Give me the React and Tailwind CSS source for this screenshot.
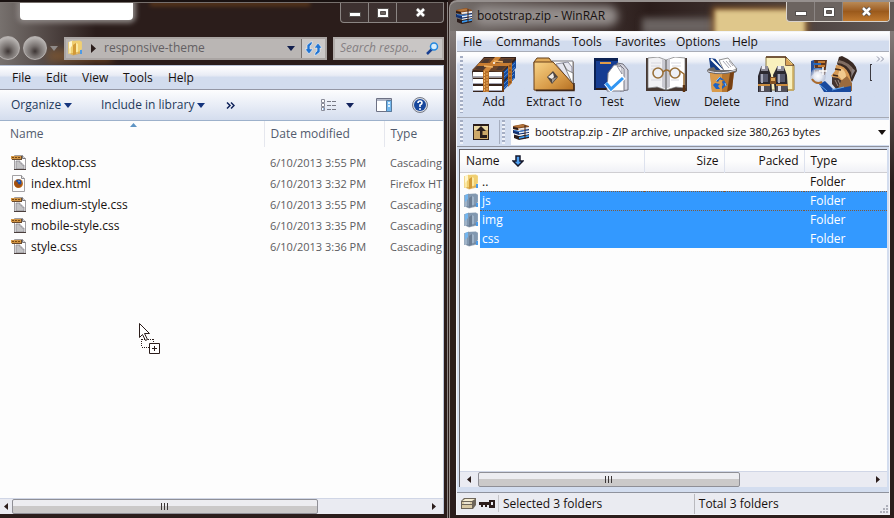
import React from "react";

const files = [
  { name: "desktop.css", date: "6/10/2013 3:55 PM", type: "Cascading", kind: "css" },
  { name: "index.html", date: "6/10/2013 3:32 PM", type: "Firefox HT", kind: "html" },
  { name: "medium-style.css", date: "6/10/2013 3:55 PM", type: "Cascading", kind: "css" },
  { name: "mobile-style.css", date: "6/10/2013 3:35 PM", type: "Cascading", kind: "css" },
  { name: "style.css", date: "6/10/2013 3:36 PM", type: "Cascading", kind: "css" },
];

const entries = [
  { name: "..", selected: false },
  { name: "js", selected: true, focused: true },
  { name: "img", selected: true },
  { name: "css", selected: true },
];

function Caret({ className = "" }) {
  return (
    <svg className={className} width="8" height="5" viewBox="0 0 8 5" fill="currentColor" aria-hidden="true">
      <path d="M0 0h8L4 5z" />
    </svg>
  );
}

function CssFileIcon() {
  return (
    <svg width="17" height="17" viewBox="0 0 17 17" aria-hidden="true">
      <path d="M3.500 1.500h8l3 3v11h-11z" fill="#fff" stroke="#a19fa2" />
      <path d="M11.500 1.500v3h3" fill="#d7d7da" stroke="#77757a" />
      <path d="M5 7h4v2h2v2h2v4H5z" fill="#c3c3c5" />
      <path d="M5 7h4v2h2v2h2v4H5z" fill="none" stroke="#8b8990" strokeWidth=".8" />
      <path d="M3 15.500h12" stroke="#4a3e3c" />
      <path d="M0 2h11v4H1z" fill="#6a4a2c" />
      <rect x="0" y="2" width="10" height="3" fill="#d19545" />
      <path d="M1 3.500h2M4 3.500h2M7 3.500h2" stroke="#7a4a12" />
    </svg>
  );
}

function HtmlFileIcon() {
  return (
    <svg width="17" height="17" viewBox="0 0 17 17" aria-hidden="true">
      <path d="M1.500 .5h9l3 3v13h-12z" fill="#fdfdfd" stroke="#a3a1a4" />
      <path d="M10.500 .5v3h3" fill="#e4e4e4" stroke="#8d8b8e" />
      <circle cx="7.500" cy="8.500" r="4.500" fill="#c46f1c" />
      <circle cx="7.500" cy="7.500" r="3" fill="#1c4fa8" />
      <path d="M3.500 6c1 1 2 0 3 1 0 2 2 3 4.500 2-.5 3-3 4-5 3.300S2.700 9 3.500 6z" fill="#a2500f" />
      <path d="M7 5.500l2 .5-1 1.500z" fill="#8fc4f5" />
    </svg>
  );
}

function FolderIcon({ blue }) {
  const light = blue ? "#9fb3c8" : "#fbe9a4";
  const mid = blue ? "#8298b0" : "#f0cf72";
  const dark = blue ? "#6b7d93" : "#d29a37";
  return (
    <svg width="15" height="16" viewBox="0 0 15 16" aria-hidden="true">
      <path d="M1 2l4-1.500V15L1 13.500z" fill={light} />
      <path d="M3 1l9-.500 1.500 1.500v11L3 14z" fill={mid} />
      <path d="M1 2l3-1v5L1 9z" fill={blue ? "#73b6ef" : "#fff6cf"} />
      <path d="M5 15V5l3-2v11z" fill={dark} />
      <path d="M8 3l2 1v10H8z" fill={light} />
      <path d="M1 13.500L5 15.500l8-2V11L5 13z" fill={dark} opacity=".6" />
      <path d="M12 10h2v4h-2z" fill="#4d9be6" />
      <path d="M.5 2v12M13.500 1.500V9" stroke={mid} strokeWidth=".8" />
    </svg>
  );
}

function BooksSmall() {
  return (
    <svg width="17" height="16" viewBox="0 0 17 16" aria-hidden="true">
      <path d="M0 2L10 0l6 2v3L6 6 0 5z" fill="#8a4d1f" />
      <path d="M1 2l9-1.500L14 2 5 3.500z" fill="#b4763d" />
      <path d="M0 3l5 1v2L0 5z" fill="#2b1d1b" />
      <path d="M5 4.500L16 3v2L6 6z" fill="#ececf0" />
      <path d="M0 6l6 1 10-2v4L6 11 0 9z" fill="#14306d" />
      <path d="M6 8l10-1.700V8L6 9.600z" fill="#e8f0fa" />
      <path d="M1 6.500l5 1 8-1.500" fill="none" stroke="#3c7fd2" />
      <path d="M1 10.500l5 1.500 10-2v4L6 16l-5-2z" fill="#2b1d1b" />
      <path d="M6 13l10-2v1.800L6 14.700z" fill="#3a9bf2" />
      <path d="M6 11.300l10-1.700" stroke="#fff" />
      <path d="M12 1v14" stroke="#3a2118" />
    </svg>
  );
}

function AddIcon() {
  return (
    <svg width="44" height="36" viewBox="0 0 44 36" aria-hidden="true">
      <path d="M0 14L12 0h32v9L30 35H1V25z" fill="#35231c" />
      <path d="M0 13L12 1h31L30 15z" fill="#6b4429" />
      <path d="M3 12L13 2h5l-7 11zM24 13l8-11h9L30 13z" fill="#4c382f" />
      <path d="M11 14L23 0h6L17 14z" fill="#d0873a" />
      <path d="M7 6h33l-2 3H5z" fill="#c77c31" />
      <path d="M12 9l9 1M22 4l9 1" stroke="#f0b465" strokeWidth="1.500" />
      <path d="M31 15L44 3v8L31 24z" fill="#154a9d" />
      <path d="M31 26L43 13v8L31 34z" fill="#154a9d" />
      <path d="M32 16L43 6M32 20l11-10M32 27l10-10M32 31l10-10" stroke="#5897de" strokeWidth=".8" />
      <rect x="1" y="15" width="29" height="5.500" fill="#fff" />
      <rect x="1" y="22" width="29" height="5" fill="#fff" />
      <rect x="1" y="29" width="29" height="5" fill="#fff" />
      <path d="M1 19.500h29M1 26.500h29M1 33.500h29" stroke="#a7a7b4" />
      <path d="M11 14h6v21h-6z" fill="#b87029" />
      <path d="M12.500 14v21M15 16v19" stroke="#edb062" strokeDasharray="2 1" />
      <path d="M30 15h2v20h-2z" fill="#6b3b17" />
      <path d="M36 9l4-4v21l-4 4z" fill="#b87029" />
      <path d="M38 8v20" stroke="#6b3b17" strokeDasharray="2 2" />
      <circle cx="22" cy="6" r="1" fill="#fff" />
    </svg>
  );
}

function ExtractIcon() {
  return (
    <svg width="42" height="35" viewBox="0 0 42 35" aria-hidden="true">
      <defs>
        <linearGradient id="fold" x1="0" y1="0" x2="1" y2="1">
          <stop offset="0" stopColor="#f8d387" />
          <stop offset=".6" stopColor="#d89b48" />
          <stop offset="1" stopColor="#b46f22" />
        </linearGradient>
      </defs>
      <path d="M1 5l3-4h12l3 4h21v28H2z" fill="#e0aa59" stroke="#65401d" />
      <path d="M19 4h21v26z" fill="#fafafa" stroke="#77757a" />
      <path d="M23 7l12-2 4 5v17z" fill="#e6e6ef" stroke="#8f8fa0" />
      <path d="M30 6l4 7 6 3v12z" fill="#fff" stroke="#555" strokeWidth=".7" />
      <path d="M1 5h19l21 23v5H1z" fill="url(#fold)" stroke="#6a411a" />
      <path d="M3 33.500h38V26" fill="none" stroke="#3f281a" strokeWidth="1.500" />
      <path d="M14 20l6-6 5 6-6 7z" fill="#4e4540" />
      <path d="M15 20l5-4 1 4-2 2z" fill="#f1ede7" />
      <path d="M19 22l5-2-5 6z" fill="#a29b94" />
    </svg>
  );
}

function TestIcon() {
  return (
    <svg width="36" height="35" viewBox="0 0 36 35" aria-hidden="true">
      <path d="M0 1h24v32H0z" fill="#163d92" />
      <path d="M0 1h24v3H0zM0 1h2v32H0z" fill="#0b2152" />
      <path d="M2 32h22" stroke="#2b1d1b" strokeWidth="2" />
      <path d="M6 6h11" stroke="#df9c48" strokeWidth="2" />
      <path d="M23 6l6 1 5 6v20l-8 1z" fill="#d5d5df" stroke="#6f6f7a" />
      <path d="M14 16l6-8h6l4 4v22H13z" fill="#fff" stroke="#777784" />
      <path d="M23 9l5 1v7z" fill="#eeeef4" stroke="#777784" strokeWidth=".7" />
      <path d="M12 26l5 6L30 20" fill="none" stroke="#fff" strokeWidth="5" />
      <path d="M12 26l5 6L29 21" fill="none" stroke="#3296f2" strokeWidth="3" />
    </svg>
  );
}

function ViewIcon() {
  return (
    <svg width="42" height="36" viewBox="0 0 42 36" aria-hidden="true">
      <path d="M0 1h3v30l9-1 8 3 9-3 9 1V1h3v33H0z" fill="#463832" />
      <path d="M2 1l10-1 8 3v30l-9-3-9 1z" fill="#f1f1f4" stroke="#777" strokeWidth=".7" />
      <path d="M20 3l9-3 10 1v30l-9-1-10 3z" fill="#fff" stroke="#777" strokeWidth=".7" />
      <path d="M16 2l4 2v28l-4-2zM24 1l-4 3v28l4-2z" fill="#c9c9d1" />
      <path d="M20 3v30" stroke="#555" />
      <path d="M5 6h10M5 9h9M5 12h9M25 6h10M26 9h9M5 23h10M25 23h8" stroke="#d7d7df" />
      <circle cx="12" cy="16" r="5" fill="#eef0f6" stroke="#9a713b" strokeWidth="1.600" />
      <circle cx="29" cy="16" r="5" fill="#eef0f6" stroke="#9a713b" strokeWidth="1.600" />
      <path d="M17 15q4-4 7 0M34 14l4 3v17" fill="none" stroke="#9a6a2e" strokeWidth="1.500" />
      <path d="M38 28v7" stroke="#5d3310" strokeWidth="2.500" />
    </svg>
  );
}

function DeleteIcon() {
  return (
    <svg width="31" height="36" viewBox="0 0 31 36" aria-hidden="true">
      <path d="M2 1l8 1 8 12-14 2z" fill="#123a85" />
      <path d="M4 2l12 12M9 1l10 13" stroke="#fff" strokeWidth="2" />
      <path d="M12 3l9-2 9 11-12 4z" fill="#fff" stroke="#777" strokeWidth=".8" />
      <path d="M16 4l6 7M19 4l5 6M22 4l4 5" stroke="#9c9ca7" strokeWidth=".9" />
      <path d="M0 14q0-3 7-4l2 3h19l1-2q4 5-7 6-20 2-22-3z" fill="#6d6967" />
      <path d="M3 16q12 3 24-1l-2 17-5 3H5z" fill="#b8772f" />
      <path d="M3 16q7 2 12 1v18H5z" fill="#d99b4c" />
      <path d="M23 16l4-1-2 17-5 3z" fill="#764014" />
      <path d="M1 14q13 4 28-1" fill="none" stroke="#dedee6" />
      <path d="M9 24l4-4 4 3h-3l-1-1-2 3zM17 23l3 5-5 4v-3l2-1-2-3zM8 26l5 1-2 2 2 3H9l-3-4z" fill="#1e63c4" />
      <path d="M9 24l4-4M18 26l1 3" stroke="#83c1f6" />
    </svg>
  );
}

function FindIcon() {
  return (
    <svg width="38" height="37" viewBox="0 0 38 37" aria-hidden="true">
      <path d="M8 1h20l8 8v25H8z" fill="#f9f0bd" stroke="#8f7c49" />
      <path d="M35 10v24H19" fill="none" stroke="#caa95a" strokeWidth="1.500" />
      <path d="M8 1h20M28 1v8h8" fill="none" stroke="#5b3820" strokeWidth="1.500" />
      <path d="M28 2l7 7h-7z" fill="#d8a356" />
      <path d="M3 11h7l3 8 1 17H0V20zM19 11h7l3 8 1 17H17l-2-17z" fill="#2c2930" />
      <path d="M3 10h7v5H3zM19 10h7v5h-7z" fill="#8d8c98" />
      <path d="M4 10h3v3H4zM20 10h3v3h-3z" fill="#ececf2" />
      <path d="M2 18h8v8H2zM19 18h8v8h-8z" fill="#585a6d" />
      <path d="M3 18h2v9H3zM20 18h2v9h-2z" fill="#a7a9b8" />
      <path d="M0 28h12v2H0zM18 28h12v2H18z" fill="#c98b3f" />
      <path d="M1 30h11v6H1zM18 30h11v6H18z" fill="#514f58" />
      <path d="M3 30h3v5H3zM20 30h3v5h-3z" fill="#dcdce4" />
      <path d="M12 21h6v7h-6z" fill="#815023" />
      <path d="M13 22h4v3h-4z" fill="#dda758" />
    </svg>
  );
}

function WizardIcon() {
  return (
    <svg width="48" height="37" viewBox="0 0 48 37" aria-hidden="true">
      <defs>
        <radialGradient id="glow">
          <stop offset="0" stopColor="#fff" />
          <stop offset=".5" stopColor="#e6e9f2" />
          <stop offset="1" stopColor="#aab2c7" stopOpacity=".5" />
        </radialGradient>
      </defs>
      <path d="M2 5l3-1v14l-3 2z" fill="#244f9c" />
      <path d="M5 4h13l-2 15H6z" fill="#5e351f" />
      <path d="M9 6h7M9 10h7" stroke="#c47b34" strokeWidth="2" />
      <path d="M4 8h8M4 13h10" stroke="#2765b8" strokeWidth="2" />
      <path d="M28 8l2-7 3-1q14 6 15 15l-5 11-7-10z" fill="#382923" />
      <path d="M28 7q10 0 15 11l3-3Q40 6 30 4z" fill="#806d62" />
      <path d="M43 13l3 1-4 8z" fill="#8b8180" />
      <path d="M27 9q9 0 13 9l2 6-4 6-9-6-7-4 4-5z" fill="#d69a56" />
      <path d="M31 12q6 2 6 9l-4 3-4-5z" fill="#f0c98e" />
      <path d="M26 13l6 1M24 19l5 1" stroke="#402819" strokeWidth="1.500" />
      <path d="M23 21l6 1 4 3 5 1-1 6-9 2-5-6z" fill="#44342f" />
      <path d="M26 24l3 6M29 24l3 7" stroke="#9b897f" />
      <path d="M32 25l6-5 5 7v8H28z" fill="#9b6b3d" />
      <path d="M10 28l6-3 8 8 8-1 10-2v6H15z" fill="#184a9e" />
      <path d="M11 29l7 6M23 34l12-3" stroke="#60a5ed" />
      <circle cx="9" cy="20" r="8" fill="url(#glow)" />
      <path d="M3 23q4 6 10 3" fill="none" stroke="#aa6a2b" strokeWidth="2" />
      <path d="M14 11v8M10 15h8" stroke="#fff" strokeWidth="1.500" />
    </svg>
  );
}

const tools = [
  { label: "Add", Icon: AddIcon, width: "w-[60px]" },
  { label: "Extract To", Icon: ExtractIcon, width: "w-[60px]" },
  { label: "Test", Icon: TestIcon, width: "w-[56px]" },
  { label: "View", Icon: ViewIcon, width: "w-[54px]" },
  { label: "Delete", Icon: DeleteIcon, width: "w-[56px]" },
  { label: "Find", Icon: FindIcon, width: "w-[54px]" },
  { label: "Wizard", Icon: WizardIcon, width: "w-[58px]" },
];

function WindowControls({ active }) {
  const base = "flex items-center justify-center border-r border-[#8b8583] last:border-r-0";
  return (
    <div className={`flex h-5 overflow-hidden rounded-b border border-t-0 ${active ? "border-[#d8d2cc] bg-[#6c6460]" : "border-[#8b8583] bg-[#3d3130]"}`}>
      <button aria-label="Minimize" className={`${base} w-7 pt-1`}>
        <svg width="12" height="5" viewBox="0 0 12 5"><rect x=".5" y=".5" width="11" height="4" fill="#fff" stroke="#55504e" /></svg>
      </button>
      <button aria-label="Maximize" className={`${base} w-7`}>
        <svg width="12" height="10" viewBox="0 0 12 10">
          <path d="M.5 .5h11v9H.5z" fill="#fff" stroke="#55504e" />
          <path d="M3.500 3.500h5v3h-5z" fill="#6c6460" stroke="#55504e" />
        </svg>
      </button>
      <button aria-label="Close" className={`${base} w-[46px] ${active ? "bg-linear-to-b from-[#b98a55] via-[#9b5a1c] to-[#c07a30]" : ""}`}>
        <svg width="13" height="11" viewBox="0 0 13 11">
          <path d="M3 2l7 7M10 2l-7 7" stroke="#55504e" strokeWidth="4.500" />
          <path d="M3 2l7 7M10 2l-7 7" stroke="#fff" strokeWidth="2.500" />
        </svg>
      </button>
    </div>
  );
}

function ScrollBar({ arrowWidth, thumbWidth }) {
  return (
    <div className="flex h-4 shrink-0 border-t border-[#d0d6e6] bg-[#eaebf2]">
      <button aria-label="Scroll left" className={`flex shrink-0 items-center justify-center ${arrowWidth}`}>
        <svg width="4" height="7" viewBox="0 0 4 7"><path d="M4 0v7L0 3.500z" fill="#2b1d1b" /></svg>
      </button>
      <div className="flex min-w-0 flex-1">
        <div className={`flex items-center justify-center gap-[2px] rounded-xs border border-[#8f8f96] bg-linear-to-b from-[#ededf1] from-45% to-[#cbc9c9] to-50% ${thumbWidth}`}>
          <span className="h-[7px] w-px bg-[#3b3637]" />
          <span className="h-[7px] w-px bg-[#3b3637]" />
          <span className="h-[7px] w-px bg-[#3b3637]" />
        </div>
      </div>
      <button aria-label="Scroll right" className="flex w-[18px] shrink-0 items-center justify-center">
        <svg width="4" height="7" viewBox="0 0 4 7"><path d="M0 0v7l4-3.500z" fill="#2b1d1b" /></svg>
      </button>
    </div>
  );
}

function NavOrb({ label }) {
  return (
    <button aria-label={label} className="size-6 shrink-0 rounded-full border border-[#b5b0ae] bg-[radial-gradient(circle_at_50%_65%,#3d3534_0%,#77716f_30%,#b8b4b2_75%)]" />
  );
}

function ExplorerWindow() {
  return (
    <section aria-label="responsive-theme" className="relative flex min-w-0 flex-col overflow-hidden border-t-2 border-[#191110] pr-1 pb-1">
      <div className="absolute inset-y-0 left-0 h-16 w-24 bg-linear-to-r from-[#77716e] to-transparent" />
      <div className="absolute top-0 left-5 h-[18px] w-[113px] rounded-b-sm bg-white shadow-[0_0_5px_3px_#8b8583]" />
      <div className="absolute top-0 left-[150px] h-1 w-40 bg-[#814c18] opacity-60 blur-[2px]" />
      <div className="absolute top-12 left-12 h-3 w-16 bg-[#a36728] opacity-50 blur-xs" />
      <div className="absolute top-0 right-0 h-full w-px bg-[#8b8583]" />
      <header className="relative flex h-[63px] shrink-0 flex-col border-t border-[#77706d]">
        <div className="flex justify-end"><WindowControls /></div>
        <div className="mt-3 flex h-[26px] items-center">
          <div className="-ml-1 flex w-[68px] shrink-0 items-center gap-[3px]">
            <NavOrb label="Back" />
            <NavOrb label="Forward" />
            <button aria-label="Recent pages" className="text-[#8f8a88]"><Caret /></button>
          </div>
          <div className="flex h-[23px] min-w-0 flex-1 items-center border-2 border-[#aaa5a3] bg-[#bab6b4] pl-[2px]">
            <FolderIcon />
            <svg className="mr-2 ml-2" width="5" height="9" viewBox="0 0 5 9"><path d="M0 0l5 4.500L0 9z" fill="#2b1d1b" /></svg>
            <span className="min-w-0 flex-1 truncate text-[#636063]">responsive-theme</span>
            <button aria-label="Previous locations" className="mr-[6px] text-[#121f4d]"><Caret /></button>
            <button aria-label="Refresh" className="flex h-full w-6 items-center justify-center border-l border-[#77716e] bg-[#cbc8c7]">
              <svg width="17" height="15" viewBox="0 0 17 15">
                <path d="M7 0v3L5 5v3h3L4 13 0 8h2V4zM10 15v-3l2-2V7H9l4-5 4 5h-2v4z" fill="#2174d2" stroke="#eef5fd" strokeWidth=".6" />
              </svg>
            </button>
          </div>
          <label className="ml-[6px] flex h-[23px] w-[111px] shrink-0 items-center border-2 border-[#b1acaa] bg-[#c9c6c5] pr-[3px] pl-[5px]">
            <input aria-label="Search" placeholder="Search respo..." className="w-full min-w-0 flex-1 bg-transparent italic outline-none placeholder:text-[#858083]" />
            <svg width="13" height="13" viewBox="0 0 13 13">
              <path d="M1 12l5-5" stroke="#193f91" strokeWidth="2.500" />
              <circle cx="8" cy="4.500" r="3.500" fill="#d8edfb" stroke="#2488df" strokeWidth="1.500" />
            </svg>
          </label>
        </div>
      </header>
      <div className="relative flex min-h-0 flex-1 flex-col border-t border-r border-[#b9c3d6] bg-[#fdfdfd]">
        <nav className="flex h-6 shrink-0 items-center border-b border-[#9497a5] bg-linear-to-b from-white via-[#e9ecf5] via-40% to-[#d2dcee] to-50% pl-3">
          <button className="w-[34px] text-left">File</button>
          <button className="w-9 text-left">Edit</button>
          <button className="w-[41px] text-left">View</button>
          <button className="w-[45px] text-left">Tools</button>
          <button>Help</button>
        </nav>
        <div className="flex h-[31px] shrink-0 items-center border-b border-[#9db1cb] bg-linear-to-b from-[#fdfdfe] to-[#d4ddee] pr-[15px] pl-[11px] text-[#1e395b]">
          <button className="flex w-[90px] items-center gap-[3px] whitespace-nowrap">Organize <Caret className="text-[#14347d]" /></button>
          <button className="flex w-[125px] items-center gap-[3px] whitespace-nowrap">Include in library <Caret className="text-[#14347d]" /></button>
          <button aria-label="More commands" className="text-[#10235a]">
            <svg width="9" height="7" viewBox="0 0 9 7" fill="none" stroke="currentColor" strokeWidth="1.500"><path d="M1 .5l3 3-3 3M5 .5l3 3-3 3" /></svg>
          </button>
          <span className="flex-1" />
          <button aria-label="Change your view" className="mr-[10px]">
            <svg width="15" height="13" viewBox="0 0 15 13">
              <path d="M.5 .5h3v3h-3zM.5 4.500h3v3h-3zM.5 8.500h3v3h-3z" fill="#fff" stroke="#8a8c99" />
              <path d="M6 2.500h4M11 2.500h4M6 6.500h4M11 6.500h4M6 10.500h4M11 10.500h4" stroke="#777985" />
              <path d="M2 10h1" stroke="#2c80db" />
            </svg>
          </button>
          <button aria-label="View options" className="mr-[22px] text-[#14245d]"><Caret /></button>
          <button aria-label="Show the preview pane" className="mr-5">
            <svg width="16" height="14" viewBox="0 0 16 14">
              <path d="M.5 .5h15v13H.5z" fill="#fff" stroke="#6d7184" />
              <path d="M1 2h14" stroke="#b3b8c7" strokeWidth="2" />
              <path d="M10.500 2.500h5v11h-5z" fill="#73b7ed" stroke="#587a9d" />
              <path d="M12 5h2M12 8h2" stroke="#def2ff" strokeWidth="2" />
            </svg>
          </button>
          <button aria-label="Get help">
            <svg width="16" height="16" viewBox="0 0 16 16">
              <circle cx="8" cy="8" r="7.500" fill="#d8dbe3" stroke="#777b87" />
              <circle cx="8" cy="8" r="6" fill="#17479c" />
              <path d="M6 6q0-2 2-2t2 2q0 1-2 2v2" fill="none" stroke="#fff" strokeWidth="1.600" />
              <circle cx="8" cy="12" r="1" fill="#fff" />
            </svg>
          </button>
        </div>
        <div className="min-h-0 flex-1 overflow-hidden">
          <table className="w-full table-fixed border-collapse text-left whitespace-nowrap">
            <colgroup><col className="w-[264px]" /><col className="w-[120px]" /><col /></colgroup>
            <thead className="text-[#525b6d]">
              <tr className="h-[26px]">
                <th className="relative border-r border-[#e5e7ee] pl-[10px] font-normal">
                  Name
                  <svg className="absolute top-[2px] left-[130px]" width="7" height="4" viewBox="0 0 7 4"><path d="M0 4l3.500-4L7 4z" fill="#5e94c4" /></svg>
                </th>
                <th className="border-r border-[#e5e7ee] pl-[6px] font-normal">Date modified</th>
                <th className="pl-[6px] font-normal">Type</th>
              </tr>
              <tr className="h-[5px]"><td colSpan={3} /></tr>
            </thead>
            <tbody className="text-[#5c5c60]">
              {files.map((f) => (
                <tr key={f.name} className="h-[21px]">
                  <td className="pl-[11px]">
                    <span className="flex items-center gap-[3px] text-[#17110f]">
                      {f.kind === "css" ? <CssFileIcon /> : <HtmlFileIcon />}
                      {f.name}
                    </span>
                  </td>
                  <td className="pl-[6px] text-[11px]">{f.date}</td>
                  <td className="pl-[6px] text-[11px]">{f.type}</td>
                </tr>
              ))}
            </tbody>
          </table>
        </div>
        <ScrollBar arrowWidth="w-3" thumbWidth="w-[74%]" />
      </div>
    </section>
  );
}

function Grip({ className = "" }) {
  return <span className={`w-[3px] shrink-0 bg-[repeating-linear-gradient(#a5aec4_0_2px,#eef1f8_2px_4px)] ${className}`} />;
}

function WinRarWindow() {
  return (
    <section aria-label="bootstrap.zip - WinRAR" className="relative flex min-w-0 flex-col overflow-hidden rounded-tl-lg border-t-2 border-l border-[#96908e] bg-linear-to-b from-[#96908e] via-[#2b1d1b] via-35% to-[#2b1d1b] pr-1 pb-[3px] pl-[6px]">
      <div className="absolute top-0 right-0 left-0 h-[29px] bg-linear-to-r from-[#77716e] via-[#2b1d1b] via-45% to-[#625a57]" />
      <div className="absolute top-1 left-6 h-5 w-36 rounded-full bg-[#938d8b] blur-[4px]" />
      <div className="absolute top-4 left-48 h-4 w-20 bg-[#6a6361] blur-[3px]" />
      <div className="absolute top-2 left-[265px] h-7 w-[90px] bg-[#dfc78b] shadow-[0_0_5px_3px_#8b5a2b] blur-[2px]" />
      <header className="relative flex h-[29px] shrink-0 items-start">
        <h1 className="flex flex-1 items-center gap-1 pt-[6px]"><BooksSmall />bootstrap.zip - WinRAR</h1>
        <WindowControls active />
      </header>
      <div className="relative flex min-h-0 flex-1 flex-col border border-[#f3f4f8] bg-[#d3ddef]">
        <nav className="flex h-5 shrink-0 items-center border-b border-[#a9adb8] bg-linear-to-b from-white via-[#e9ecf5] via-40% to-[#d2dcee] to-50% pl-[6px]">
          <button className="w-[33px] text-left">File</button>
          <button className="w-[76px] text-left">Commands</button>
          <button className="w-[43px] text-left">Tools</button>
          <button className="w-[61px] text-left">Favorites</button>
          <button className="w-14 text-left">Options</button>
          <button>Help</button>
        </nav>
        <div className="relative flex h-[66px] shrink-0 items-stretch overflow-hidden border-b border-[#a6aab5] bg-linear-to-b from-[#fdfdfe] from-5% via-[#e9edf6] via-15% to-[#d3ddef] to-20% pl-[3px]">
          <Grip className="my-1" />
          <div className="flex pl-px">
            {tools.map(({ label, Icon, width }) => (
              <button key={label} className={`flex shrink-0 flex-col items-center pt-1 ${width}`}>
                <span className="mb-px flex h-[37px] items-center"><Icon /></span>
                <span className="whitespace-nowrap">{label}</span>
              </button>
            ))}
          </div>
          <span className="mt-3 ml-2 h-[17px] w-[2px] shrink-0 border border-r-0 border-[#3c3a40]" />
          <button aria-label="More tools" className="absolute top-1 right-1 text-[#8a8fa3]">
            <svg width="9" height="6" viewBox="0 0 9 6" fill="none" stroke="currentColor"><path d="M1 .5L3.500 3 1 5.500M5 .5L7.500 3 5 5.500" /></svg>
          </button>
        </div>
        <div className="flex h-[29px] shrink-0 items-center border-b border-[#8f929d] pl-[3px]">
          <Grip className="h-6" />
          <button aria-label="Up one level" className="flex w-9 justify-center">
            <svg width="16" height="16" viewBox="0 0 16 16">
              <path d="M0 0h16v16H0z" fill="#2b1d1b" />
              <path d="M1 2h14v13H1z" fill="#cda869" />
              <path d="M1 2h14v4H1z" fill="#ead8a4" />
              <path d="M8 2l5 5h-3.500v4H14v3H7V7H3z" fill="#2b1d1b" />
            </svg>
          </button>
          <span className="mr-[2px] h-6 w-px bg-[#a6aebf]" />
          <Grip className="h-6" />
          <label className="ml-[6px] flex h-[25px] min-w-0 flex-1 items-center gap-[5px] bg-[#fdfdfd] pr-[3px] pl-[2px]">
            <BooksSmall />
            <select aria-label="Archive path" className="min-w-0 flex-1 appearance-none bg-transparent text-[11px] outline-none">
              <option>bootstrap.zip - ZIP archive, unpacked size 380,263 bytes</option>
            </select>
            <Caret />
          </label>
        </div>
        <div className="mx-[2px] mt-[2px] flex min-h-0 flex-1 flex-col border-t border-l border-[#636066] bg-[#fdfdfd]">
          <div className="min-h-0 flex-1 overflow-hidden">
            <table className="w-full table-fixed border-collapse text-left whitespace-nowrap">
              <colgroup><col className="w-5" /><col className="w-[164px]" /><col className="w-20" /><col className="w-20" /><col /></colgroup>
              <thead className="bg-linear-to-b from-[#fdfdfd] from-50% to-[#f0f1f6]">
                <tr className="h-[22px] border-b border-[#cfced2]">
                  <th colSpan={2} className="border-r border-[#dde2ee] pl-[6px] font-normal">
                    <span className="flex items-center gap-3">
                      Name
                      <svg width="12" height="12" viewBox="0 0 12 12"><path d="M4 1h4v5h3L6 11 1 6h3z" fill="#4f9ff0" stroke="#15182c" strokeWidth="1.500" /></svg>
                    </span>
                  </th>
                  <th className="border-r border-[#dde2ee] pr-[5px] text-right font-normal">Size</th>
                  <th className="border-r border-[#dde2ee] pr-[5px] text-right font-normal">Packed</th>
                  <th className="pl-[6px] font-normal">Type</th>
                </tr>
              </thead>
              <tbody>
                {entries.map((e) => (
                  <tr key={e.name} className="h-[19px]">
                    <td className="pl-1"><FolderIcon blue={e.selected} /></td>
                    <td colSpan={3} className={`pl-[2px] ${e.selected ? "bg-[#3399ff] text-white" : ""} ${e.focused ? "border-y border-dotted border-[#7f5a3c]" : ""}`}>{e.name}</td>
                    <td className={`pl-[6px] ${e.selected ? "bg-[#3399ff] text-white" : ""} ${e.focused ? "border-y border-dotted border-[#7f5a3c]" : ""}`}>Folder</td>
                  </tr>
                ))}
              </tbody>
            </table>
          </div>
          <ScrollBar arrowWidth="w-[18px]" thumbWidth="w-[67%]" />
        </div>
        <footer className="mt-[5px] flex h-[22px] shrink-0 items-center border-t border-[#8f929d] bg-[#eaebf1]">
          <span className="flex w-[42px] items-center gap-[3px] border-r border-[#c5c5ca] py-[3px] pl-1">
            <svg width="15" height="11" viewBox="0 0 15 11">
              <path d="M0 3l3-3h12v7l-3 4H0z" fill="#6e665a" />
              <path d="M1 3l3-2h10l-3 2z" fill="#f5ecd0" />
              <path d="M1 4h10v2H1zM1 7h10v3H1z" fill="#d9caa6" />
              <path d="M3 5h6" stroke="#fff" />
            </svg>
            <svg width="16" height="8" viewBox="0 0 16 8">
              <path d="M0 2h10V0h6v8h-6V5H8v2H6V5H4v2H2V5H0z" fill="#2b1d1b" />
              <path d="M12 2h2v3h-2z" fill="#eaebf1" />
            </svg>
          </span>
          <span className="flex-[200] border-r border-[#b9b9be] py-[2px] pl-1">Selected 3 folders</span>
          <span className="flex-[190] pl-1">Total 3 folders</span>
          <svg className="self-end" width="9" height="9" viewBox="0 0 9 9" fill="#aeb0ba"><path d="M6 0h2v2H6zM3 3h2v2H3zM6 3h2v2H6zM0 6h2v2H0zM3 6h2v2H3zM6 6h2v2H6z" /></svg>
        </footer>
      </div>
    </section>
  );
}

function DragCursor() {
  return (
    <svg className="pointer-events-none absolute top-[323px] left-[139px]" width="22" height="32" viewBox="0 0 22 32" aria-hidden="true">
      <path d="M2.500 16.500h12M2.500 24.500h12M2.500 16v8M14.500 16v8" fill="none" stroke="#2b1d1b" strokeDasharray="1 1" shapeRendering="crispEdges" />
      <path d="M.5 .5v14l3-3 3 6 2-1-3-6h5z" fill="#fff" stroke="#2b1d1b" />
      <path d="M10.500 20.500h10v10h-10z" fill="#fff" stroke="#2b1d1b" />
      <path d="M13 25.500h5M15.500 23v5" stroke="#2b1d1b" />
    </svg>
  );
}

export default function App() {
  return (
    <main className="relative grid h-screen grid-cols-[448fr_445fr] gap-px overflow-hidden bg-[#2b1d1b] font-['Open_Sans','Noto_Sans',sans-serif] text-[12px] leading-4 text-[#17110f]">
      <ExplorerWindow />
      <WinRarWindow />
      <DragCursor />
    </main>
  );
}
